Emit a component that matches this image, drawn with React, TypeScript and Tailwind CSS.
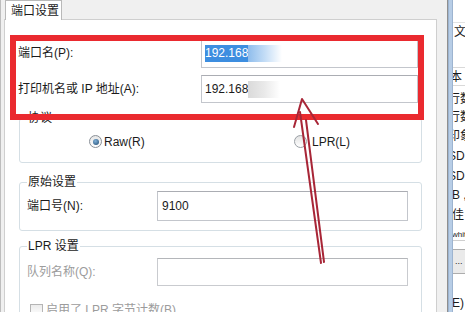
export default function App() {
  return (
    <div className="relative w-[465px] h-[312px] overflow-hidden bg-[#f0f0f0] flex font-['Liberation_Sans','Noto_Sans_CJK_SC',sans-serif] text-[12px] text-[#1b1b1b]">
      {/* dialog */}
      <div className="w-[447px] shrink-0 flex flex-col pl-[3px] pr-[10px] border-l border-[#bdbdbd]">
        {/* tab strip */}
        <div className="h-[23px] flex items-end pl-[1px]">
          <div className="relative z-10 -mb-[1px] w-[57px] h-[20px] bg-white border border-b-0 border-[#b9b9b9] pl-[5px] leading-[20px]">
            端口设置
          </div>
        </div>

        {/* panel */}
        <div className="h-[320px] bg-white border border-[#cfcfcf] pl-[13px] pr-[14px] pt-[18px]">
          <div className="flex items-center h-[30px] pr-[4px]">
            <div className="w-[183px]">端口名(P):</div>
            <div className="flex-1 h-full flex items-center border border-[#c3c6cc] border-t-[#abadb3] pl-[3px]">
              <span className="bg-[#3d8ee0] text-white leading-[17px]">192.168</span>
              <span className="w-[34px] h-[17px] bg-gradient-to-r from-[#8fbdec] via-[#c4ddf6] to-white" />
            </div>
          </div>
          <div className="flex items-center h-[28px] mt-[7px] pr-[4px]">
            <div className="w-[183px]">打印机名或 IP 地址(A):</div>
            <div className="flex-1 h-full flex items-center border border-[#c3c6cc] border-t-[#abadb3] pl-[3px]">
              <span className="leading-[17px]">192.168</span>
              <span className="w-[32px] h-[17px] bg-gradient-to-r from-[#dadada] via-[#e9e9e9] to-white" />
            </div>
          </div>

          {/* protocol */}
          <fieldset className="mt-[7px] ml-[1px] border border-[#d5dfe5] rounded-[3px] px-[7px] pb-[5px]">
            <legend className="px-[1px] leading-[16px]">协议</legend>
            <div className="h-[31px] flex items-center pl-[62px]">
              <div className="w-[205px] flex items-center gap-[2px]">
                <span className="w-[13px] h-[13px] rounded-full border border-[#8a9097] bg-gradient-to-b from-[#e6e6e6] to-white flex items-center justify-center">
                  <span className="w-[6px] h-[6px] rounded-full bg-[radial-gradient(circle_at_40%_35%,#7fb0d8,#1f4a70)]" />
                </span>
                <span>Raw(R)</span>
              </div>
              <div className="flex items-center gap-[5px]">
                <span className="w-[13px] h-[13px] rounded-full border border-[#9a9fa5] bg-gradient-to-b from-[#e2e2e2] to-white" />
                <span>LPR(L)</span>
              </div>
            </div>
          </fieldset>

          {/* raw settings */}
          <fieldset className="mt-[11px] ml-[1px] border border-[#d5dfe5] rounded-[3px] px-[7px] pb-[9px]">
            <legend className="px-[1px] leading-[16px]">原始设置</legend>
            <div className="mt-[1px] h-[30px] flex items-center">
              <div className="w-[130px]">端口号(N):</div>
              <div className="w-[251px] h-full flex items-center border border-[#c3c6cc] border-t-[#abadb3] pl-[4px]">9100</div>
            </div>
          </fieldset>

          {/* lpr settings */}
          <fieldset className="mt-[7px] ml-[1px] border border-[#d5dfe5] rounded-[3px] px-[7px] pb-[10px]">
            <legend className="px-[1px] leading-[16px]">LPR 设置</legend>
            <div className="mt-[4px] h-[28px] flex items-center">
              <div className="w-[130px] text-[#9c9c9c]">队列名称(Q):</div>
              <div className="w-[251px] h-full border border-[#c9cbcf] border-t-[#b4b6ba]" />
            </div>
            <div className="mt-[15px] flex items-center gap-[3px] pl-[3px] text-[#9c9c9c]">
              <span className="w-[13px] h-[13px] border border-[#b5b5b5] bg-gradient-to-b from-[#ececec] to-white" />
              <span>启用了 LPR 字节计数(B)</span>
            </div>
          </fieldset>
        </div>
      </div>

      {/* window behind, right edge */}
      <div className="w-px shrink-0 bg-[#8f8f8f]" />
      <div className="w-[5px] shrink-0 bg-[#b7cde6] border-x border-[#9db4d0]" />
      <div className="flex-1 bg-white overflow-hidden flex flex-col text-[12px] leading-[18px] whitespace-nowrap">
        <div className="h-[23px] border-b border-[#e3e3e3]" />
        <div className="h-[18px] pl-[1px]">文</div>
        <div className="h-[28px] border-b border-[#d9d9d9]" />
        <div className="h-[18px] -ml-[3px] border-b border-[#d9d9d9]">本</div>
        <div className="h-[18px] -ml-[5px] mt-[4px]">行数</div>
        <div className="h-[18px] -ml-[5px]">行数</div>
        <div className="h-[20px] -ml-[5px] leading-[20px]">印象</div>
        <div className="h-[20px] -ml-[5px] leading-[20px]">SD</div>
        <div className="h-[20px] -ml-[5px] leading-[20px]">SD</div>
        <div className="h-[19px] -ml-[1px]">B ,</div>
        <div className="h-[20px] -ml-[1px] leading-[20px]">佳</div>
        <div className="mt-[4px] h-[12px] text-[8px] leading-[12px] -ml-[1px] border-b border-[#cfcfcf]">white</div>
        <div className="mt-[8px] h-[25px] bg-[#eaeaea] border-y border-[#adadad] text-[9px] leading-[23px] pl-[2px]">...</div>
        <div className="mt-[20px] -ml-[1px]">E)</div>
      </div>

      {/* annotation: red box */}
      <div className="absolute left-[10px] top-[35px] w-[414px] h-[85px] border-[6px] border-[#ea2a2f] pointer-events-none" />

      {/* annotation: arrow */}
      <svg className="absolute inset-0 pointer-events-none" width="465" height="312" viewBox="0 0 465 312" fill="none">
        <g stroke="#a82637" strokeWidth="2" strokeLinecap="round" strokeLinejoin="round">
          <path d="M294 127 L302 99 L318 124" />
          <path d="M300 112 L321 263" />
          <path d="M306 120 L324 262" />
        </g>
      </svg>
    </div>
  );
}
